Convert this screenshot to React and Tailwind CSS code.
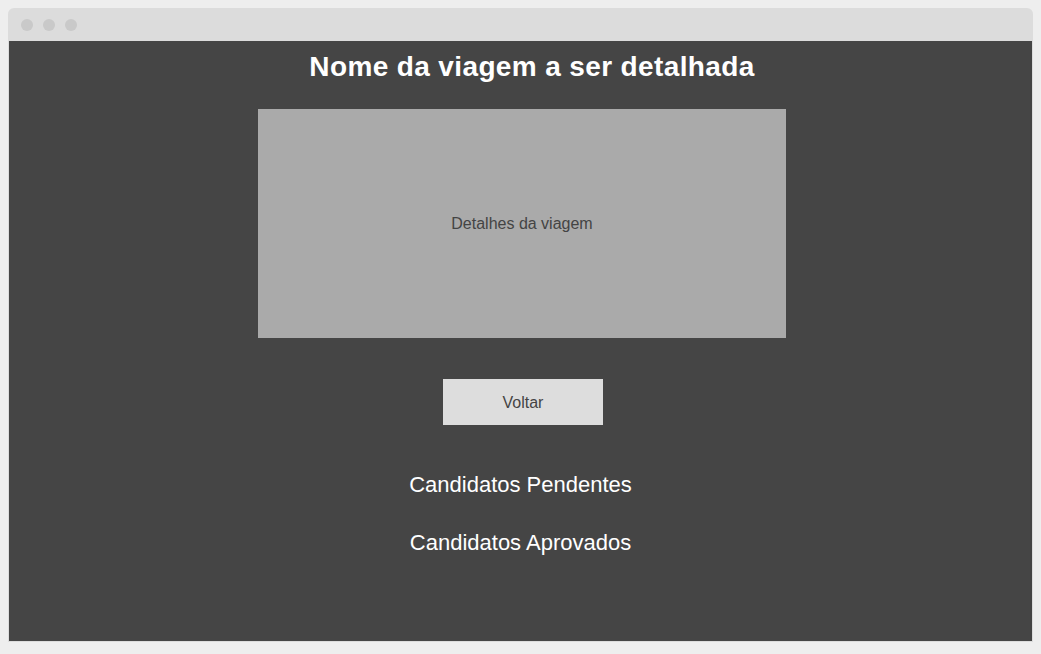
export default function App() {
  return (
    <div
      className="w-[1041px] h-[654px] bg-[#eeeeee] pt-[8px] px-[8px]"
      style={{ fontFamily: '"Liberation Sans", Arial, sans-serif' }}
    >
      <div className="w-[1025px] rounded-t-[6px] bg-[#dcdcdc] px-[1px] pb-[1px] overflow-hidden">
        {/* window bar */}
        <div className="h-[33px] flex items-center gap-[10px] pl-[12px]">
          <span className="w-[12px] h-[12px] rounded-full bg-[#c9c9c9]" />
          <span className="w-[12px] h-[12px] rounded-full bg-[#c9c9c9]" />
          <span className="w-[12px] h-[12px] rounded-full bg-[#c9c9c9]" />
        </div>

        {/* page */}
        <div className="h-[600px] bg-[#454545] flex flex-col items-center pt-[10px] pl-[3px]">
          <h1 className="ml-[20px] text-[28px] leading-[32px] font-bold text-white tracking-[0.37px]">
            Nome da viagem a ser detalhada
          </h1>

          <div className="mt-[26px] w-[528px] h-[229px] bg-[#aaaaaa] flex items-center justify-center text-[16px] text-[#444444]">
            Detalhes da viagem
          </div>

          <button className="mt-[41px] ml-[2px] w-[160px] h-[46px] pt-[2px] bg-[#dddddd] text-[16px] text-[#444444]">
            Voltar
          </button>

          <div className="mt-[47px] mr-[3px] text-[22px] leading-[26px] text-white">
            Candidatos Pendentes
          </div>
          <div className="mt-[32px] mr-[3px] text-[22px] leading-[26px] text-white">
            Candidatos Aprovados
          </div>
        </div>
      </div>
    </div>
  );
}
